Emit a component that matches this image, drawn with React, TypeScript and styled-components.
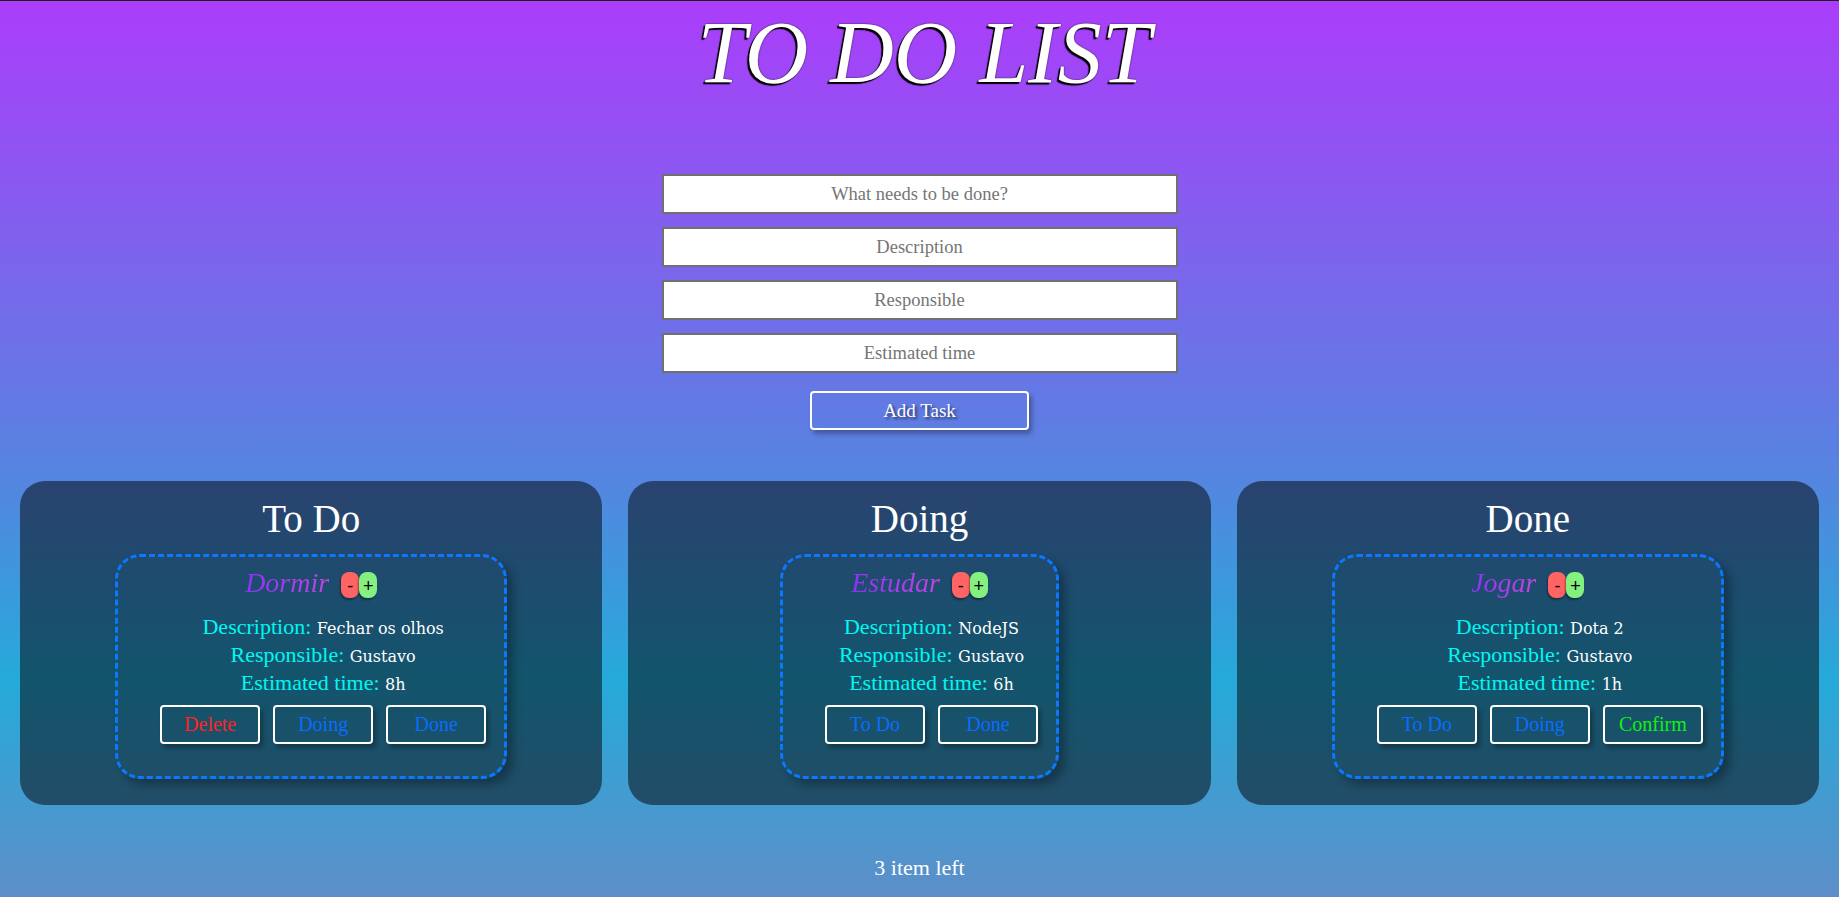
import React from "react";
import styled, { createGlobalStyle } from "styled-components";

const GlobalStyle = createGlobalStyle`
  html, body {
    margin: 0;
    padding: 0;
  }
  body {
    font-family: "Liberation Serif", "Times New Roman", serif;
  }
  * { box-sizing: border-box; }
`;

const Page = styled.div`
  min-height: 100vh;
  border-top: 1px solid #1e1e1e;
  background: linear-gradient(
    to bottom,
    #ab3dfb 0%,
    #5585e0 53%,
    #25aad9 76%,
    #5e8ec8 100%
  );
  display: flex;
  flex-direction: column;
  align-items: center;
`;

const Title = styled.h1`
  margin: 1px 0 0;
  padding-left: 9px;
  font-size: 88px;
  font-weight: 400;
  font-style: italic;
  line-height: normal;
  color: #ffffff;
  text-shadow: -2px 2px 1px #000, 0 0 1.5px #000;
`;

const Form = styled.form`
  margin-top: 71px;
  display: flex;
  flex-direction: column;
  align-items: center;
  gap: 13px;
`;

const Field = styled.input`
  width: 516px;
  height: 40px;
  border: 2px solid #707070;
  background: #ffffff;
  font-family: "Liberation Serif", serif;
  font-size: 18.5px;
  text-align: center;
  color: #333;
  outline: none;
  &::placeholder {
    color: #757575;
  }
`;

const AddButton = styled.button`
  margin-top: 5px;
  width: 219px;
  height: 39px;
  background: transparent;
  border: 2px solid #ffffff;
  border-radius: 4px;
  box-shadow: 3px 4px 5px rgba(0, 0, 0, 0.3);
  color: #ffffff;
  font-family: "Liberation Serif", serif;
  font-size: 19px;
  text-shadow: 2px 2px 3px rgba(0, 0, 0, 0.6);
  cursor: pointer;
`;

const Board = styled.div`
  margin-top: 51px;
  width: 100%;
  padding: 0 20px;
  display: grid;
  grid-template-columns: repeat(3, 1fr);
  gap: 26px;
`;

const Column = styled.section`
  background: rgba(0, 0, 0, 0.5);
  border-radius: 25px;
  padding: 15px 0 26px;
  display: flex;
  flex-direction: column;
  align-items: center;
`;

const ColumnTitle = styled.h2`
  margin: 0 0 13px;
  font-size: 39px;
  font-weight: 400;
  line-height: normal;
  color: #ffffff;
`;

const Card = styled.article`
  border: 3px dashed #0a78ff;
  border-radius: 25px;
  padding: 10px 18px 32px;
  box-shadow: 6px 6px 10px rgba(0, 0, 0, 0.3);
  display: flex;
  flex-direction: column;
  align-items: center;
`;

const CardHeader = styled.div`
  display: flex;
  align-items: center;
  gap: 12px;
  height: 32px;
`;

const TaskName = styled.span`
  font-size: 28px;
  font-style: italic;
  line-height: normal;
  background: linear-gradient(90deg, #8a33f5, #c246e0);
  -webkit-background-clip: text;
  background-clip: text;
  color: transparent;
`;

const Pills = styled.div`
  display: flex;
  margin-top: 4px;
`;

const Pill = styled.button<{ $bg: string }>`
  width: 18px;
  height: 26px;
  padding: 2px 0 0;
  border: none;
  border-radius: 8px;
  background: ${(p) => p.$bg};
  box-shadow: -1px 2px 2px rgba(0, 0, 0, 0.35);
  color: #000;
  font-family: "Liberation Sans", sans-serif;
  font-size: 18px;
  font-weight: 300;
  line-height: 1;
  cursor: pointer;
`;

const Details = styled.div`
  margin-top: 14px;
  padding-left: 24px;
  display: flex;
  flex-direction: column;
  align-items: center;
`;

const InfoLine = styled.p`
  margin: 0;
  font-size: 22px;
  line-height: 28px;
  color: #00f7f2;
  white-space: nowrap;
`;

const Value = styled.span`
  font-family: "DejaVu Serif", Georgia, serif;
  font-size: 16px;
  line-height: 1;
  color: #ffffff;
`;

const Actions = styled.div`
  margin-top: 8px;
  display: flex;
  gap: 13px;
`;

const ActionButton = styled.button<{ $color: string }>`
  width: 100px;
  height: 39px;
  background: transparent;
  border: 2px solid #ffffff;
  border-radius: 4px;
  box-shadow: 3px 4px 5px rgba(0, 0, 0, 0.3);
  color: ${(p) => p.$color};
  font-family: "Liberation Serif", serif;
  font-size: 20px;
  cursor: pointer;
`;

const Footer = styled.p`
  margin: 50px 0 0;
  font-size: 22px;
  line-height: normal;
  color: #ffffff;
`;

type Action = { label: string; color: string };

type Task = {
  name: string;
  description: string;
  responsible: string;
  time: string;
  actions: Action[];
};

const RED = "#ff2323";
const BLUE = "#0a6cff";
const GREEN = "#12f012";

const columns: { title: string; task: Task }[] = [
  {
    title: "To Do",
    task: {
      name: "Dormir",
      description: "Fechar os olhos",
      responsible: "Gustavo",
      time: "8h",
      actions: [
        { label: "Delete", color: RED },
        { label: "Doing", color: BLUE },
        { label: "Done", color: BLUE },
      ],
    },
  },
  {
    title: "Doing",
    task: {
      name: "Estudar",
      description: "NodeJS",
      responsible: "Gustavo",
      time: "6h",
      actions: [
        { label: "To Do", color: BLUE },
        { label: "Done", color: BLUE },
      ],
    },
  },
  {
    title: "Done",
    task: {
      name: "Jogar",
      description: "Dota 2",
      responsible: "Gustavo",
      time: "1h",
      actions: [
        { label: "To Do", color: BLUE },
        { label: "Doing", color: BLUE },
        { label: "Confirm", color: GREEN },
      ],
    },
  },
];

export default function App() {
  return (
    <>
      <GlobalStyle />
      <Page>
        <Title>TO DO LIST</Title>
        <Form onSubmit={(e) => e.preventDefault()}>
          <Field placeholder="What needs to be done?" />
          <Field placeholder="Description" />
          <Field placeholder="Responsible" />
          <Field placeholder="Estimated time" />
          <AddButton type="submit">Add Task</AddButton>
        </Form>
        <Board>
          {columns.map((col) => (
            <Column key={col.title}>
              <ColumnTitle>{col.title}</ColumnTitle>
              <Card>
                <CardHeader>
                  <TaskName>{col.task.name}</TaskName>
                  <Pills>
                    <Pill $bg="#ff6363">-</Pill>
                    <Pill $bg="#84f07f">+</Pill>
                  </Pills>
                </CardHeader>
                <Details>
                  <InfoLine>
                    Description: <Value>{col.task.description}</Value>
                  </InfoLine>
                  <InfoLine>
                    Responsible: <Value>{col.task.responsible}</Value>
                  </InfoLine>
                  <InfoLine>
                    Estimated time: <Value>{col.task.time}</Value>
                  </InfoLine>
                  <Actions>
                    {col.task.actions.map((a) => (
                      <ActionButton key={a.label} $color={a.color}>
                        {a.label}
                      </ActionButton>
                    ))}
                  </Actions>
                </Details>
              </Card>
            </Column>
          ))}
        </Board>
        <Footer>3 item left</Footer>
      </Page>
    </>
  );
}
